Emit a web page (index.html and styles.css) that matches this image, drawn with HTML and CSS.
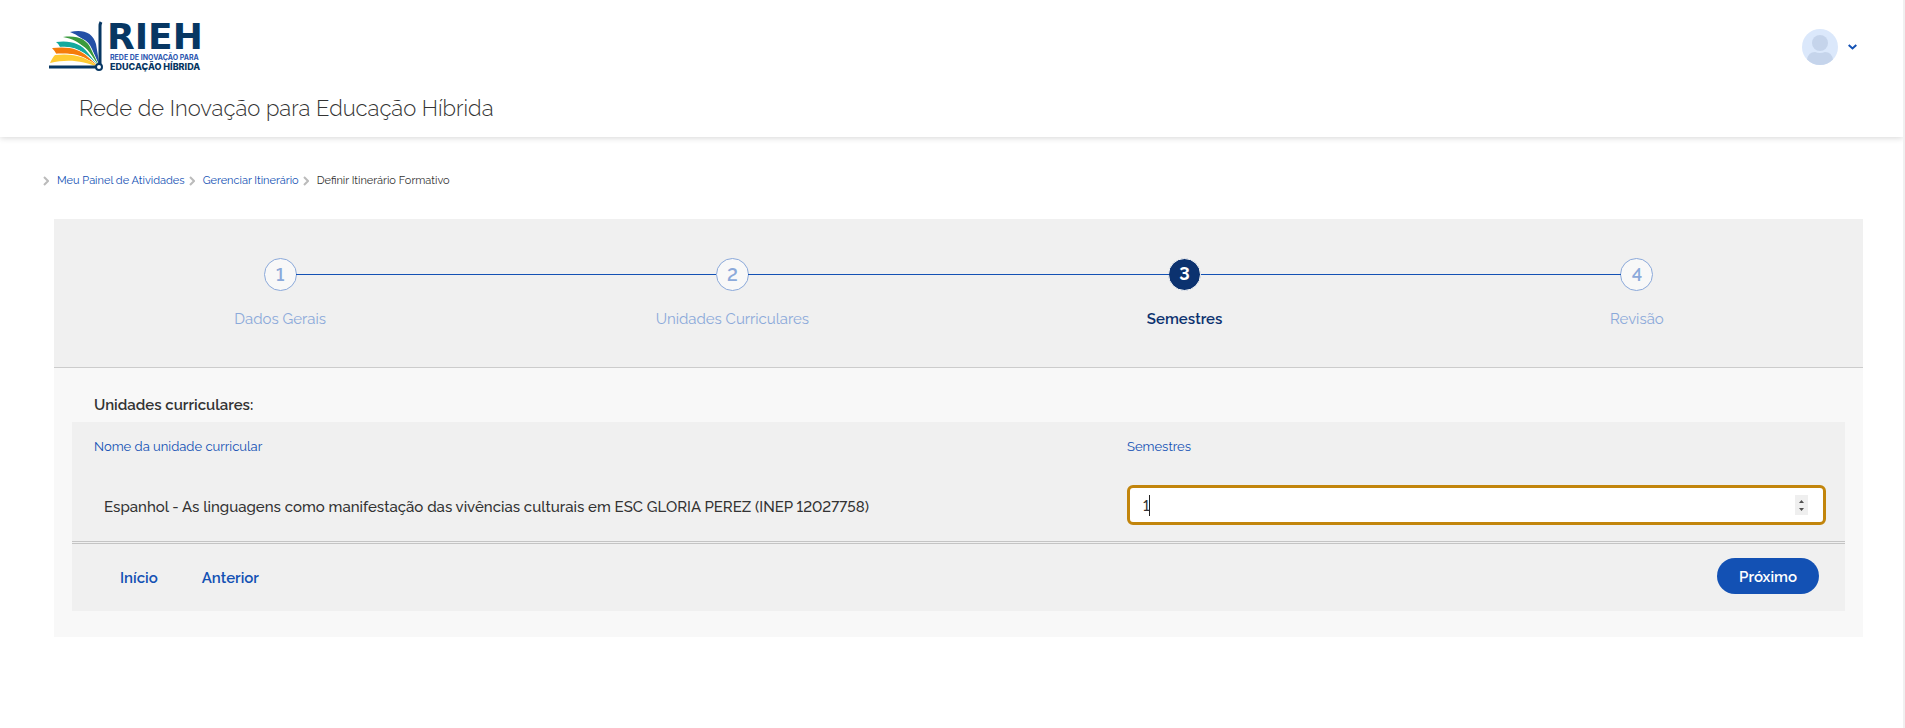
FILE: index.html
```html
<!DOCTYPE html>
<html lang="pt-BR">
<head>
<meta charset="utf-8">
<meta name="viewport" content="width=device-width, initial-scale=1">
<title>Rede de Inovação para Educação Híbrida</title>
<link rel="stylesheet" href="styles.css">
</head>
<body>
<header class="header">
  <div class="header-top">
    <a class="logo" href="#" aria-label="RIEH">
      <svg width="160" height="56" viewBox="0 -4 160 56">
        <path fill="#2350a6" d="M21 12c12-3 23 0 26 12l4 24C45 30 37 18 21 12z"/>
        <path fill="#fff" d="M14 16c15-1 25 3 29 13l8 19C41 30 32 19 14 16z"/>
        <path fill="#3a9a3c" d="M14 17c14-2 24 2 28 12l9 19C41 32 32 20 14 17z"/>
        <path fill="#fff" d="M7 21c15-2 27 2 34 12l10 15C39 33 28 24 11 26z"/>
        <path fill="#14a99d" d="M7 22c13-2 25 1 32 11l12 15C39 34 28 25 11 27q-1-3-4-5z"/>
        <path fill="#fff" d="M3 27c17-1 29 2 37 10l11 11C37 36 26 30 8 34z"/>
        <path fill="#f57c0b" d="M3 28c17-2 28 1 36 9l12 11C37 37 26 31 8 35q-2-4-5-7z"/>
        <path fill="#fff" d="M5 34c17-2 32 2 46 14C33 39 18 39 1 43z"/>
        <path fill="#ffcb32" d="M1 43c2-4 3-6 5-8 17-2 31 1 45 13C33 40 18 39 1 43z"/>
        <path fill="none" stroke="#073763" stroke-width="3" d="M0 47h48M51 45V6q0-2 1-4"/>
        <circle cx="50" cy="47" r="3" fill="#fff" stroke="#073763" stroke-width="2"/>
        <text class="logo-name" x="58" y="29">RIEH</text>
        <text class="logo-line" x="61" y="40">REDE DE INOVAÇÃO PARA</text>
        <text class="logo-line logo-strong" x="61" y="50">EDUCAÇÃO HÍBRIDA</text>
      </svg>
    </a>
    <button class="user" type="button" aria-label="Menu do usuário">
      <svg width="36" height="36" viewBox="0 0 36 36">
        <clipPath id="disc"><circle cx="18" cy="18" r="18"/></clipPath>
        <g clip-path="url(#disc)">
          <path fill="#dbe8fb" d="M0 0h36v36H0z"/>
          <circle cx="18" cy="14" r="8" fill="#c5d4eb"/>
          <path fill="#c5d4eb" d="M5 36v-5q1-8 8-8 5 2 10 0 7 0 8 8v5z"/>
        </g>
      </svg>
      <svg width="9" height="6" viewBox="0 0 9 6"><path fill="none" stroke="#1351b4" stroke-width="2" d="m.7 1 3.8 3.4L8.300 1"/></svg>
    </button>
  </div>
  <p class="site-title">Rede de Inovação para Educação Híbrida</p>
</header>

<nav class="crumbs" aria-label="Trilha">
  <svg class="sep" viewBox="0 0 6 10"><path d="m1 1 4 4-4 4"/></svg>
  <a href="#">Meu Painel de Atividades</a>
  <svg class="sep" viewBox="0 0 6 10"><path d="m1 1 4 4-4 4"/></svg>
  <a href="#">Gerenciar Itinerário</a>
  <svg class="sep" viewBox="0 0 6 10"><path d="m1 1 4 4-4 4"/></svg>
  <span>Definir Itinerário Formativo</span>
</nav>

<main class="wizard">
  <ol class="steps">
    <li class="step"><span class="dot">1</span><span class="label">Dados Gerais</span></li>
    <li class="step"><span class="dot">2</span><span class="label">Unidades Curriculares</span></li>
    <li class="step active" aria-current="step"><span class="dot">3</span><span class="label">Semestres</span></li>
    <li class="step"><span class="dot">4</span><span class="label">Revisão</span></li>
  </ol>
  <form class="content">
    <h1 class="heading">Unidades curriculares:</h1>
    <div class="card">
      <table class="units">
        <thead>
          <tr><th class="name">Nome da unidade curricular</th><th>Semestres</th></tr>
        </thead>
        <tbody>
          <tr>
            <td class="name"><label for="sem">Espanhol - As linguagens como manifestação das vivências culturais em ESC GLORIA PEREZ (INEP 12027758)</label></td>
            <td class="field-cell">
              <div class="field">
                <input id="sem" type="number" value="1">
                <span class="caret"></span>
                <span class="spinner">
                  <svg width="13" height="20" viewBox="0 0 13 20"><path fill="#505050" d="M4 8h5L6.500 5zM4 13h5l-2.500 3z"/></svg>
                </span>
              </div>
            </td>
          </tr>
        </tbody>
      </table>
      <div class="actions">
        <button class="link" type="button">Início</button>
        <button class="link" type="button">Anterior</button>
        <button class="primary" type="button">Próximo</button>
      </div>
    </div>
  </form>
</main>
</body>
</html>
```
FILE: styles.css
```css
* { box-sizing: border-box; }
body {
  margin: 0;
  min-height: 100vh;
  border-right: 2px solid #f0f0f0;
  background: #fff;
  color: #333;
  font: 500 15px/24px Raleway, "Open Sans", sans-serif;
  font-variant-numeric: lining-nums;
}
button { border: 0; background: none; font: inherit; padding: 0; cursor: pointer; }
a { color: #1351b4; text-decoration: none; }

.header {
  padding: 16px 46px 13px 49px;
  box-shadow: 0 1px 6px rgba(0, 0, 0, .16);
}
.header-top { display: flex; justify-content: space-between; align-items: flex-end; }
.logo { display: block; height: 56px; }
.logo svg { display: block; }
.logo-name { font: 700 36px "DejaVu Sans", sans-serif; fill: #073763; }
.logo-line { font: 700 7px Inter, sans-serif; fill: #2b56b0; }
.logo-strong { font-size: 9px; font-weight: 800; fill: #073763; }
.user { display: flex; align-items: center; gap: 10px; margin-bottom: 7px; }
.site-title { margin: 20px 0 0 30px; font-size: 22px; line-height: 32px; font-weight: 300; }

.crumbs {
  display: flex;
  align-items: center;
  padding: 32px 43px 26px;
  font-size: 11px;
  font-weight: 400;
}
.sep { width: 6px; height: 10px; margin-right: 8px; fill: none; stroke: #bbb; stroke-width: 2; }
a + .sep { margin-left: 4px; }

.wizard { margin: 0 40px 0 54px; background: #f8f8f8; }
.steps {
  display: flex;
  margin: 0;
  padding: 39px 0 35px;
  list-style: none;
  background: #f0f0f0;
  border-bottom: 1px solid #ccc;
}
.step {
  position: relative;
  flex: 1;
  display: flex;
  flex-direction: column;
  align-items: center;
  gap: 16px;
  color: #8ba9da;
  font-weight: 400;
}
.step + .step::before {
  content: "";
  position: absolute;
  top: 16px;
  left: calc(-50% + 16px);
  right: calc(50% + 16px);
  height: 1px;
  background: #1351b4;
}
.dot {
  width: 33px;
  height: 33px;
  border: 1px solid #8ba9da;
  border-radius: 50%;
  background: #f8f8f8;
  text-align: center;
  font-size: 18px;
  line-height: 31px;
  font-weight: 600;
}
.label { padding-bottom: 1px; }
.active { color: #0c326f; font-weight: 600; }
.active .dot { border-color: #f8f8f8; background: #0c326f; color: #fff; font-weight: 700; line-height: 29px; }

.content { padding: 25px 18px 26px; }
.heading { margin: 0; padding: 0 22px 5px; font-size: 15px; line-height: 24px; font-weight: 600; }
.card { background: #f0f0f0; }
.units { width: 100%; border-collapse: collapse; table-layout: fixed; }
th { padding: 13px 0 11px; text-align: left; font-size: 13px; font-weight: 400; color: #1351b4; }
th.name { width: 1055px; padding-left: 22px; }
td { padding: 15px 19px 16px 0; }
td.name { padding: 18px 0 16px 32px; }
.field { position: relative; }
.field input {
  display: block;
  width: 100%;
  height: 40px;
  padding: 2px 13px 0;
  border: 3px solid #c2850c;
  border-radius: 6px;
  outline: 0;
  background: #fff;
  color: #333;
  font: inherit;
  font-variant-numeric: lining-nums;
  appearance: textfield;
}
.caret { position: absolute; left: 22px; top: 10px; width: 1px; height: 21px; background: #222; }
.spinner { position: absolute; right: 18px; top: 10px; width: 13px; height: 20px; background: #efefef; }
.spinner svg { display: block; }
.actions {
  display: flex;
  align-items: center;
  gap: 44px;
  padding: 14px 26px 17px 48px;
  border-top: 3px double #c4c4c4;
  font-weight: 600;
}
.link { padding-top: 3px; color: #1351b4; }
.primary {
  margin-left: auto;
  padding: 7px 22px 5px;
  border-radius: 18px;
  background: #1351b4;
  color: #fff;
}
```
